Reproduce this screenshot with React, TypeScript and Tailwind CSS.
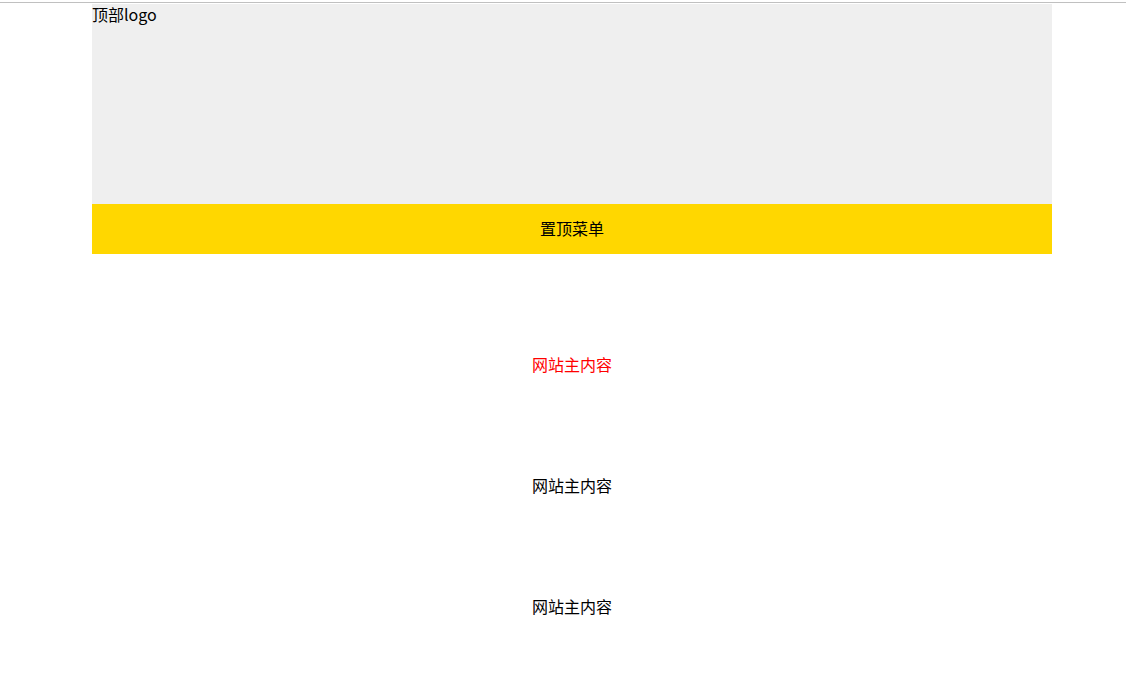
export default function App() {
  const font = { fontFamily: '"Microsoft YaHei", "Noto Sans CJK SC", "Liberation Sans", sans-serif' };
  return (
    <div className="min-h-[678px] bg-white pt-[2px] text-[16px] text-black" style={font}>
      <div className="h-px bg-[#c0c0c0]" />
      <div className="ml-[92px] mt-px w-[960px]">
        <div className="h-[200px] bg-[#efefef] leading-[20px]">顶部logo</div>
        <div className="flex h-[50px] items-center justify-center bg-[#ffd700] pb-[2px]">置顶菜单</div>
        <div className="h-[50px]" />
        <div className="flex h-[121px] items-center justify-center pb-[2px] text-[#ff0000]">网站主内容</div>
        <div className="flex h-[121px] items-center justify-center pb-[2px]">网站主内容</div>
        <div className="flex h-[121px] items-center justify-center pb-[2px]">网站主内容</div>
      </div>
    </div>
  );
}
